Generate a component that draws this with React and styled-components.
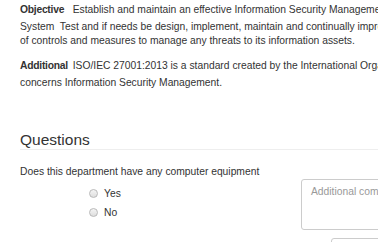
import styled, { createGlobalStyle } from 'styled-components'

const GlobalStyle = createGlobalStyle`
  html, body {
    margin: 0;
    padding: 0;
    overflow: hidden;
    background: #fff;
  }
  body {
    font-family: "Liberation Sans", Arial, sans-serif;
    font-size: 10.3px;
    color: #333;
  }
`

const Page = styled.div`
  padding-left: 20px;
  width: 520px;
`

const Description = styled.p`
  width: 403.5px;
  margin: 0 0 8px;
  line-height: 14px;
`

const Label = styled.strong`
  display: inline-block;
  width: 52.7px;
  line-height: 20px;
  font-weight: bold;
  letter-spacing: -0.25px;
  white-space: nowrap;
`

const Header = styled.h3`
  margin: 41px 0 15px;
  padding-bottom: 1px;
  font-size: 15.5px;
  font-weight: normal;
  line-height: 17px;
  border-bottom: 1px solid #eee;
`

const Question = styled.div`
  line-height: 14px;
`

const AnswerRow = styled.div`
  display: flex;
`

const Options = styled.div`
  display: flex;
  flex-direction: column;
  width: 212px;
  margin-left: 69px;
  padding-top: 4.5px;
`

const Option = styled.label`
  display: flex;
  align-items: center;
  gap: 6px;
  height: 19px;
`

const Radio = styled.input.attrs({ type: 'radio' })`
  appearance: none;
  margin: 0;
  width: 9px;
  height: 9px;
  border-radius: 50%;
  border: 1px solid #b9b9b9;
  background: linear-gradient(#f4f4f4, #dedede);
`

const Comments = styled.div`
  display: flex;
  flex-direction: column;
`

const CommentBox = styled.textarea`
  box-sizing: border-box;
  width: 170px;
  height: 51px;
  padding: 5px 9px;
  border: 1px solid #ccc;
  border-radius: 3px;
  font-family: inherit;
  font-size: 10.3px;
  line-height: 14px;
  color: #555;
  resize: none;

  &::placeholder {
    color: #999;
  }
`

const SaveButton = styled.button`
  margin: 8px 0 0 30px;
  width: 80px;
  height: 24px;
  border: 1px solid #ccc;
  border-radius: 3px;
  background: #fff;
  font-family: inherit;
  font-size: 10.3px;
  color: #333;
`

const App = () => {
  return (
    <Page>
      <GlobalStyle />
      <Description>
        <Label>Objective</Label>Establish and maintain an effective Information Security Management
        System&nbsp; Test and if needs be design, implement, maintain and continually improve a set
        of controls and measures to manage any threats to its information assets.
      </Description>
      <Description>
        <Label>Additional</Label>ISO/IEC 27001:2013 is a standard created by the International
        Organization concerns Information Security Management.
      </Description>
      <Header>Questions</Header>
      <Question>Does this department have any computer equipment</Question>
      <AnswerRow>
        <Options>
          <Option>
            <Radio name="equipment" value="yes" />
            Yes
          </Option>
          <Option>
            <Radio name="equipment" value="no" />
            No
          </Option>
        </Options>
        <Comments>
          <CommentBox placeholder="Additional comments" />
          <SaveButton>Save</SaveButton>
        </Comments>
      </AnswerRow>
    </Page>
  )
}

export default App
